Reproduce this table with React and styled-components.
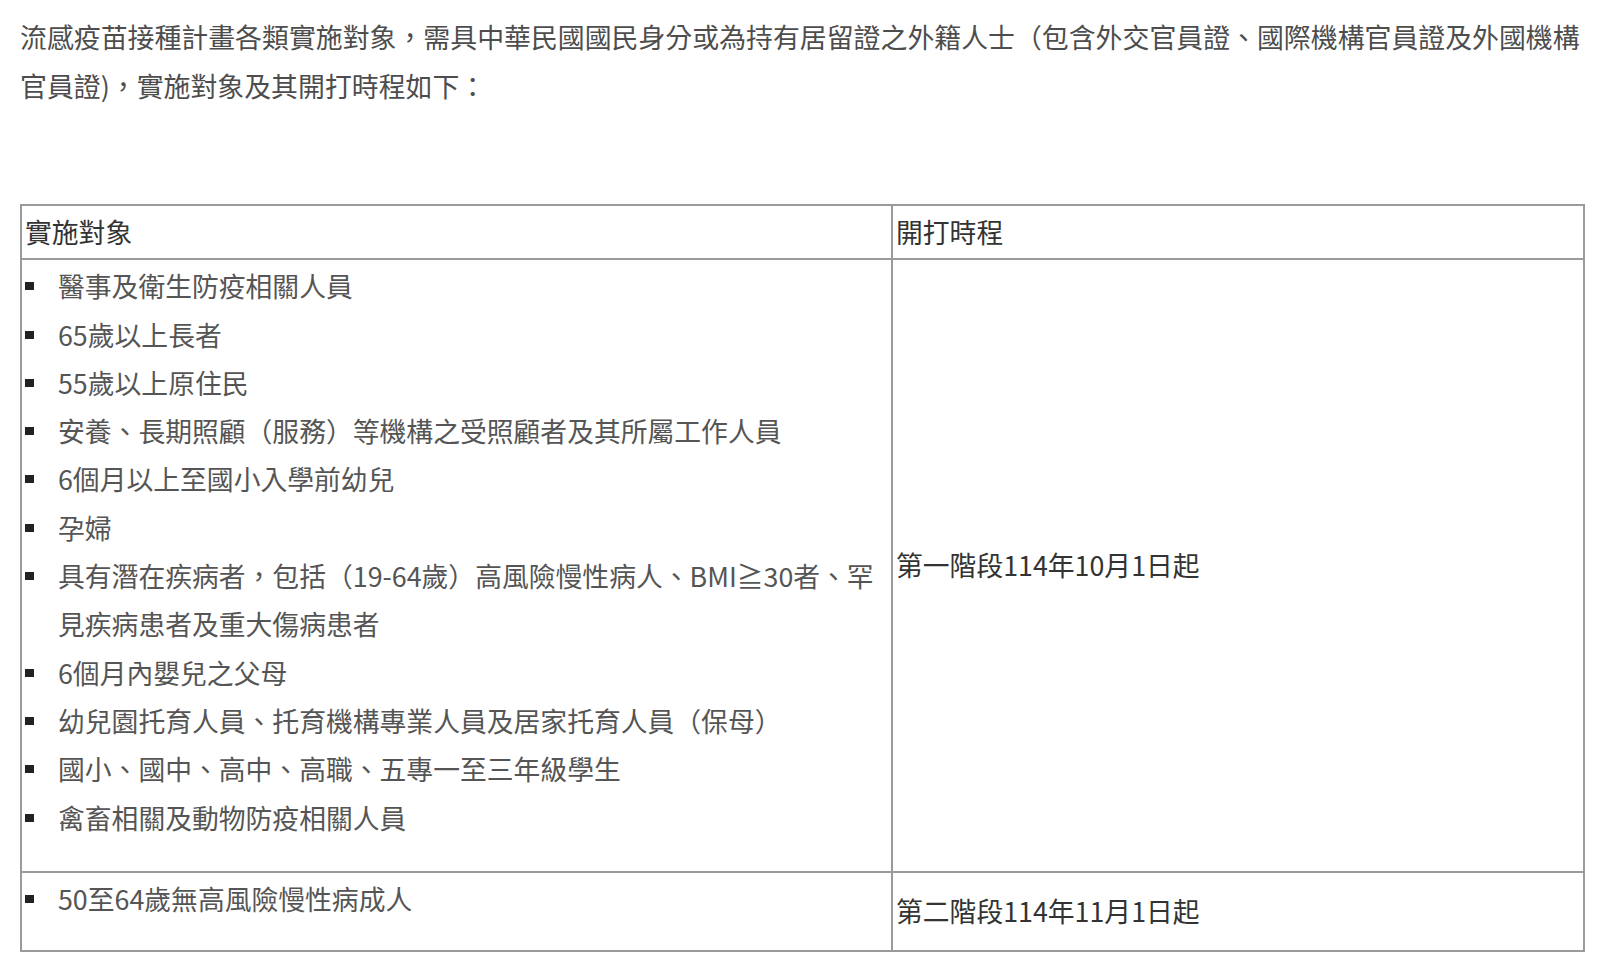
import React from 'react'
import styled, { createGlobalStyle } from 'styled-components'

const GlobalStyle = createGlobalStyle`
  html, body {
    margin: 0;
    padding: 0;
    background: #ffffff;
  }
  body {
    font-family: "Noto Sans CJK TC", "Noto Sans", sans-serif;
  }
`

const Page = styled.div`
  padding: 12px 15px 0 20px;
`

const Intro = styled.p`
  margin: 0 0 94px 0;
  width: 1575px;
  font-size: 26.9px;
  line-height: 49px;
  color: #4d4d4d;
`

const Table = styled.table`
  width: 1565px;
  box-sizing: border-box;
  border-spacing: 0;
  table-layout: fixed;
  border-top: 2px solid #9a9a9a;
  border-left: 2px solid #9a9a9a;
  font-size: 26.8px;
  line-height: 48.3px;
`

const Cell = styled.td`
  box-sizing: border-box;
  padding: 2px 3px;
  border-right: 2px solid #9a9a9a;
  border-bottom: 2px solid #9a9a9a;
  text-align: left;
  vertical-align: ${(p) => (p.$top ? 'top' : 'middle')};
  color: ${(p) => (p.$dark ? '#333333' : '#555555')};
  font-weight: 400;
`

const HeadCell = styled(Cell).attrs({ as: 'th' })`
  color: #333333;
`

const List = styled.ul`
  list-style: none;
  margin: 0 0 ${(p) => p.$gap}px 0;
  padding: 0;
`

const Item = styled.li`
  display: flex;
  align-items: flex-start;

  &::before {
    content: '';
    flex: none;
    width: 9px;
    height: 8px;
    margin: 20px 24px 0 0;
    background: #222222;
  }
`

const groups = [
  {
    items: [
      '醫事及衛生防疫相關人員',
      '65歲以上長者',
      '55歲以上原住民',
      '安養、長期照顧（服務）等機構之受照顧者及其所屬工作人員',
      '6個月以上至國小入學前幼兒',
      '孕婦',
      '具有潛在疾病者，包括（19-64歲）高風險慢性病人、BMI≧30者、罕見疾病患者及重大傷病患者',
      '6個月內嬰兒之父母',
      '幼兒園托育人員、托育機構專業人員及居家托育人員（保母）',
      '國小、國中、高中、高職、五專一至三年級學生',
      '禽畜相關及動物防疫相關人員',
    ],
    when: '第一階段114年10月1日起',
    gap: 27,
  },
  {
    items: ['50至64歲無高風險慢性病成人'],
    when: '第二階段114年11月1日起',
    gap: 25,
  },
]

export default function App() {
  return (
    <Page>
      <GlobalStyle />
      <Intro>
        流感疫苗接種計畫各類實施對象，需具中華民國國民身分或為持有居留證之外籍人士（包含外交官員證、國際機構官員證及外國機構官員證)，實施對象及其開打時程如下：
      </Intro>
      <Table>
        <thead>
          <tr>
            <HeadCell style={{ width: 871 }}>實施對象</HeadCell>
            <HeadCell>開打時程</HeadCell>
          </tr>
        </thead>
        <tbody>
          {groups.map((g) => (
            <tr key={g.when}>
              <Cell $top>
                <List $gap={g.gap}>
                  {g.items.map((it) => (
                    <Item key={it}>
                      <span>{it}</span>
                    </Item>
                  ))}
                </List>
              </Cell>
              <Cell $dark>{g.when}</Cell>
            </tr>
          ))}
        </tbody>
      </Table>
    </Page>
  )
}
